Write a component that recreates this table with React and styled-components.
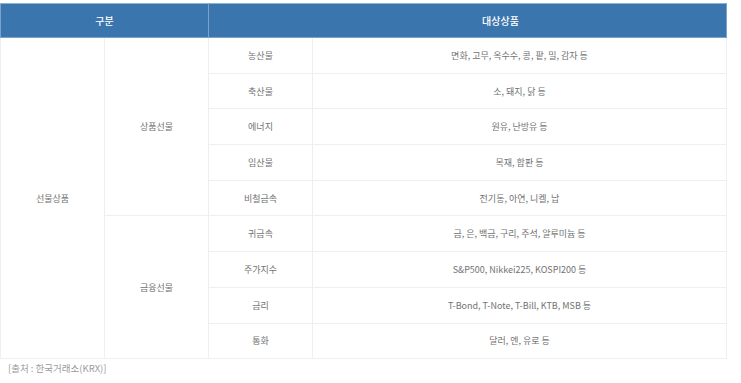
import React from 'react';
import styled, { createGlobalStyle } from 'styled-components';

const GlobalStyle = createGlobalStyle`
  body {
    margin: 0;
    background: #fff;
    font-family: "Noto Sans CJK KR", "Noto Sans", sans-serif;
  }
`;

const groups = [
  {
    name: '상품선물',
    items: [
      { type: '농산물', target: '면화, 고무, 옥수수, 콩, 팥, 밀, 감자 등' },
      { type: '축산물', target: '소, 돼지, 닭 등' },
      { type: '에너지', target: '원유, 난방유 등' },
      { type: '임산물', target: '목재, 합판 등' },
      { type: '비철금속', target: '전기동, 아연, 니켈, 납' },
    ],
  },
  {
    name: '금융선물',
    items: [
      { type: '귀금속', target: '금, 은, 백금, 구리, 주석, 알루미늄 등' },
      { type: '주가지수', target: 'S&P500, Nikkei225, KOSPI200 등' },
      { type: '금리', target: 'T-Bond, T-Note, T-Bill, KTB, MSB 등' },
      { type: '통화', target: '달러, 엔, 유로 등' },
    ],
  },
];

const total = groups.reduce((n, g) => n + g.items.length, 0);

const App = () => {
  return (
    <Page>
      <GlobalStyle />
      <Table>
        <colgroup>
          <col width="104" />
          <col width="104" />
          <col width="104" />
          <col />
        </colgroup>
        <thead>
          <tr>
            <Th colSpan={2}>구분</Th>
            <Th colSpan={2} $indent={66}>대상상품</Th>
          </tr>
        </thead>
        <tbody>
          {groups.map((group, gi) =>
            group.items.map((item, ii) => (
              <tr key={item.type}>
                {gi === 0 && ii === 0 && <Td rowSpan={total}>선물상품</Td>}
                {ii === 0 && <Td rowSpan={group.items.length}>{group.name}</Td>}
                <Td>{item.type}</Td>
                <Td>{item.target}</Td>
              </tr>
            ))
          )}
        </tbody>
      </Table>
      <Source>[출처 : 한국거래소(KRX)]</Source>
    </Page>
  );
};

const Page = styled.div`
  padding-top: 3px;
  width: 727px;
`;

const Table = styled.table`
  width: 100%;
  border-collapse: collapse;
  table-layout: fixed;
`;

const Th = styled.th`
  height: 33px;
  padding: 0 0 0 ${(p) => p.$indent || 0}px;
  background: #3b75ae;
  color: #fff;
  font-size: 10px;
  font-weight: 500;
  text-align: center;
  border: 1px solid #7aa3cc;
  border-top-color: #8db1d6;
`;

const Td = styled.td`
  height: 34.7px;
  padding: 0;
  color: #727272;
  font-size: 9px;
  text-align: center;
  border: 1px solid #efefef;
`;

const Source = styled.p`
  margin: 2px 0 0 8px;
  color: #9a9a9a;
  font-size: 9.5px;
  line-height: 14px;
`;

export default App;
